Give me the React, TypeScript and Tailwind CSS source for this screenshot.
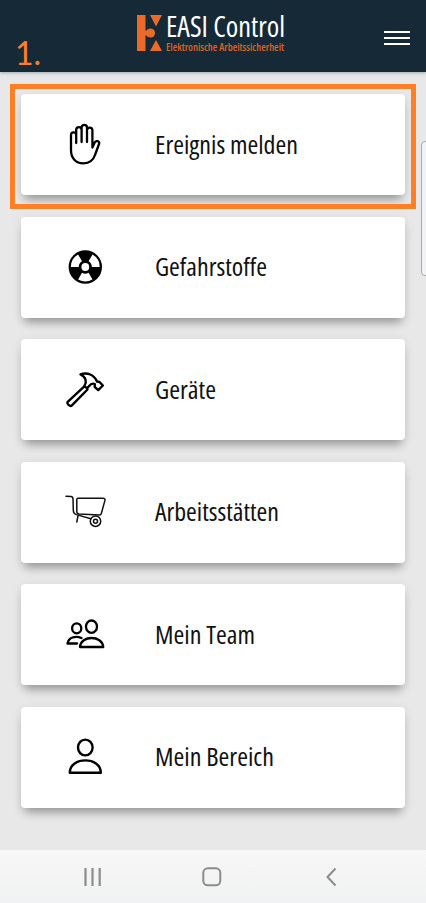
import React from "react";

const menuItems = [
  {title: "Ereignis melden", icon: <HandIcon/>, width: 143},
  {title: "Gefahrstoffe", icon: <HazardIcon/>, width: 112},
  {title: "Geräte", icon: <HammerIcon/>, width: 61},
  {title: "Arbeitsstätten", icon: <BarrowIcon/>, width: 124},
  {title: "Mein Team", icon: <TeamIcon/>, width: 100},
  {title: "Mein Bereich", icon: <PersonIcon/>, width: 119},
]

// Single line of text fitted to a fixed width
function FitText({text, width, height, baseline, className}: {
  text: string, width: number, height: number, baseline: number, className: string
}) {
  return (
      <svg width={width} height={height} className="block overflow-visible">
        <text x="0" y={baseline} textLength={width} lengthAdjust="spacingAndGlyphs" className={className}>{text}</text>
      </svg>
  )
}

function HandIcon() {
  return (
      <svg width="60" height="60" viewBox="0 0 60 60" fill="none" stroke="#000" strokeWidth="2.3" strokeLinecap="round" strokeLinejoin="round">
        <path d="M16 35V20a2.600 2.600 0 0 1 5.200 0V28M21.200 28V14.800a2.700 2.700 0 0 1 5.400 0V27M26.600 27V12.500a2.700 2.700 0 0 1 5.400 0V27M32 27V15.300a2.700 2.700 0 0 1 5.400 0V32.500L39.800 27.300c1-2 5-1.300 4.400 1.200L40.400 39c-2 6.300-5.400 9.400-12 9.400C20.600 48.400 16 43 16 35"/>
      </svg>
  )
}

function HazardIcon() {
  // Wedge pointing down, spanning 60 degrees
  const wedge = "M27 35.700L23.100 42.500A14.400 14.400 0 0 0 37.500 42.500L33.600 35.700A6.600 6.600 0 0 1 27 35.700Z"
  return (
      <svg width="60" height="60" viewBox="0 0 60 60">
        <circle cx="30.300" cy="30" r="16.700" fill="#000"/>
        <g fill="#fff">
          <path d={wedge}/>
          <path d={wedge} transform="rotate(120 30.300 30)"/>
          <path d={wedge} transform="rotate(240 30.300 30)"/>
          <circle cx="30.300" cy="30" r="3.900"/>
        </g>
      </svg>
  )
}

function HammerIcon() {
  return (
      <svg width="60" height="60" viewBox="0 0 60 60" fill="none" stroke="#000" strokeWidth="2.400" strokeLinecap="round" strokeLinejoin="round">
        <path d="M28.800 26.800L12.700 41.800c-1.500 1.500 2.300 5.400 4.200 3.600L32.500 29.500"/>
        <path d="M29.200 26.500c3-4.500 1.800-9.600-3.700-12 7-2.500 13.500.2 16.500 7l2.500.5 3.400 3.500-4.700 4.600-3.500-3.200.1-2.900c-2.200-1-4.100-.1-5.900 2.200l-1.500 1.900Z"/>
      </svg>
  )
}

function BarrowIcon() {
  return (
      <svg width="60" height="60" viewBox="0 0 60 60" fill="none" stroke="#111" strokeWidth="1.500" strokeLinecap="round" strokeLinejoin="round">
        <path d="M11 14.300l5 .3c1.700.1 2 1 2 2.500l.3 11.500c.1 2.400 1.200 3.400 3.100 4l14.500 4.200"/>
        <path d="M23 16.300h25c1.700 0 2.300.8 1.900 2.300l-3.600 12.900c-.3 1-1 1.500-2 1.400l-20.300-1c-1.500-.2-2.200-1-2.200-2.500V17.700c0-.9.400-1.400 1.200-1.400ZM23 34l-1.200 6"/>
        <circle cx="40.500" cy="39.200" r="5.200"/>
        <circle cx="40.500" cy="39.200" r="2"/>
      </svg>
  )
}

function TeamIcon() {
  return (
      <svg width="60" height="60" viewBox="0 0 60 60" fill="none" stroke="#000" strokeWidth="2.300" strokeLinecap="round" strokeLinejoin="round">
        <ellipse cx="21.700" cy="23.300" rx="4.600" ry="5"/>
        <ellipse cx="36.500" cy="21.700" rx="5.500" ry="6.200"/>
        <path d="M26.500 33c-6.200-2.600-13-.6-14 5.500h9.500"/>
        <path d="M25 42c.8-12 22.400-12 23.200 0Z"/>
      </svg>
  )
}

function PersonIcon() {
  return (
      <svg width="60" height="60" viewBox="0 0 60 60" fill="none" stroke="#000" strokeWidth="2.400" strokeLinecap="round" strokeLinejoin="round">
        <ellipse cx="30.300" cy="20.500" rx="7.300" ry="7.900"/>
        <path d="M14.800 45.700c0-16.500 31-16.500 31 0Z"/>
      </svg>
  )
}

function Header() {
  return (
      <header className="relative flex h-[72px] shrink-0 bg-[#152a36] shadow-[0_1px_3px_#54708080]">
        <p className="w-[137px] pl-[15px] pt-[34px] font-['Lato'] text-[32px] leading-[38px] text-[#ff7f27]">1.</p>
        <svg width="25" height="36" viewBox="0 0 25 36" className="mt-[15px]" fill="#e96b27">
          <path d="M0 0h8.500v36H0zM13 0h12l-6 11.500ZM13 36h12l-6-11Z"/>
          <circle cx="13.500" cy="18" r="4.600"/>
          <path d="M8 15.500h4v5H8z"/>
        </svg>
        <div className="ml-[4px] pt-3">
          <FitText text="EASI Control" width={119} height={28} baseline={24.5} className="fill-white font-['Open_Sans'] text-[29px] font-medium font-stretch-75%"/>
          <FitText text="Elektronische Arbeitssicherheit" width={118} height={14} baseline={10.5} className="fill-[#df6327] font-['Open_Sans'] text-[11.5px] font-semibold font-stretch-75%"/>
        </div>
        <div className="ml-auto mr-4 mt-[31px] flex w-[26px] flex-col gap-[4px]">
          <span className="h-[2px] bg-white"/>
          <span className="h-[2px] bg-white"/>
          <span className="h-[2px] bg-white"/>
        </div>
      </header>
  )
}

export default function App() {
  return (
      <div className="relative flex h-[903px] w-[426px] flex-col overflow-hidden bg-[#e8e8e8] font-['Open_Sans',sans-serif]">
        <Header/>
        <main className="flex flex-1 flex-col gap-[21.500px] px-[21px] pt-[22px]">
          {menuItems.map(item => (
              <button key={item.title} className="flex h-[101px] w-[384px] shrink-0 items-center rounded-[4px] bg-white pl-[34px] shadow-[0_8px_9px_-4px_#00000050,0_3px_12px_#00000018]">
                {item.icon}
                <span className="ml-10">
                  <FitText text={item.title} width={item.width} height={36} baseline={27} className="fill-[#111] font-['Open_Sans'] text-[25px] font-stretch-75%"/>
                </span>
              </button>
          ))}
        </main>
        <nav className="flex h-[53px] shrink-0 items-center bg-linear-to-b from-[#f7f7f7] to-[#f1f2f3] pl-[83px] text-[#8c8c8c]">
          <svg width="19" height="20" viewBox="0 0 19 20" stroke="currentColor" strokeWidth="2.200">
            <path d="M2.500 1v18M9.500 1v18M16.700 1v18"/>
          </svg>
          <svg width="20" height="20" viewBox="0 0 20 20" className="ml-[100px]" fill="none" stroke="currentColor" strokeWidth="2">
            <rect x="1.300" y="1.300" width="17" height="17" rx="4.500"/>
          </svg>
          <svg width="12" height="20" viewBox="0 0 12 20" className="ml-[103px]" fill="none" stroke="currentColor" strokeWidth="2">
            <path d="M10.500 1.500L2.500 10l8 8.500"/>
          </svg>
        </nav>
        <div className="absolute left-[10px] top-[84px] h-[125px] w-[406px] border-5 border-[#ff7f27]"/>
        <div className="absolute left-[421px] top-[141px] h-[135px] w-3 rounded-[4px] border border-[#aaabad] bg-[#f2f2f4]"/>
      </div>
  );
}
